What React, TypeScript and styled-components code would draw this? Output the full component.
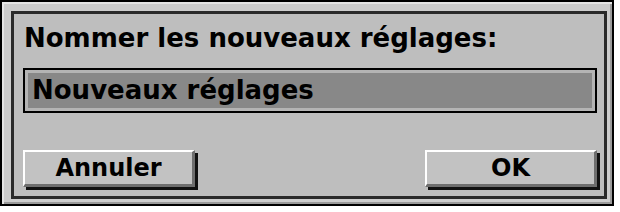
import styled, { createGlobalStyle } from "styled-components";

const Global = createGlobalStyle`
    body {
        margin: 0;
        background: #fff;
    }
`;

const Dialog = styled.div`
    box-sizing: border-box;
    width: 614px;
    height: 206px;
    border: 2px solid #000;
    background: #cdcdcd;
    padding: 9px 5px 5px 9px;
    box-shadow: inset 2px 2px 0 #e6e6e6, inset -2px -2px 0 #9a9a9a;
`;

const Inner = styled.div`
    box-sizing: border-box;
    height: 100%;
    border: 3px solid #2a2a2a;
    background: #bebebe;
    padding: 9px 7px 0 9px;
    display: flex;
    flex-direction: column;
    font-family: "DejaVu Sans", sans-serif;
    font-weight: bold;
    color: #000;
`;

const Label = styled.div`
    font-size: 26px;
    line-height: 30px;
    padding-left: 1px;
`;

const Field = styled.div`
    margin-top: 15px;
    height: 45px;
    box-sizing: border-box;
    border: 2px solid #000;
    padding: 3px;
    background: #b4b4b4;
`;

const FieldFill = styled.div`
    height: 100%;
    background: #888;
    font-size: 26px;
    line-height: 35px;
    padding-left: 4px;
`;

const Buttons = styled.div`
    margin-top: 37px;
    display: flex;
    justify-content: space-between;
`;

const Button = styled.button`
    width: 172px;
    height: 37px;
    box-sizing: border-box;
    background: #c2c2c2;
    border: none;
    border-top: 2px solid #fff;
    border-left: 2px solid #fff;
    border-right: 3px solid #6e6e6e;
    border-bottom: 3px solid #6e6e6e;
    box-shadow: 3px 3px 0 #111;
    font-family: "DejaVu Sans", sans-serif;
    font-weight: bold;
    font-size: 24px;
    color: #000;
    padding: 0;
    display: flex;
    align-items: center;
    justify-content: center;
`;

export default function App() {
    return (
        <>
            <Global />
            <Dialog>
                <Inner>
                    <Label>Nommer les nouveaux réglages:</Label>
                    <Field>
                        <FieldFill>Nouveaux réglages</FieldFill>
                    </Field>
                    <Buttons>
                        <Button>Annuler</Button>
                        <Button>OK</Button>
                    </Buttons>
                </Inner>
            </Dialog>
        </>
    );
}
